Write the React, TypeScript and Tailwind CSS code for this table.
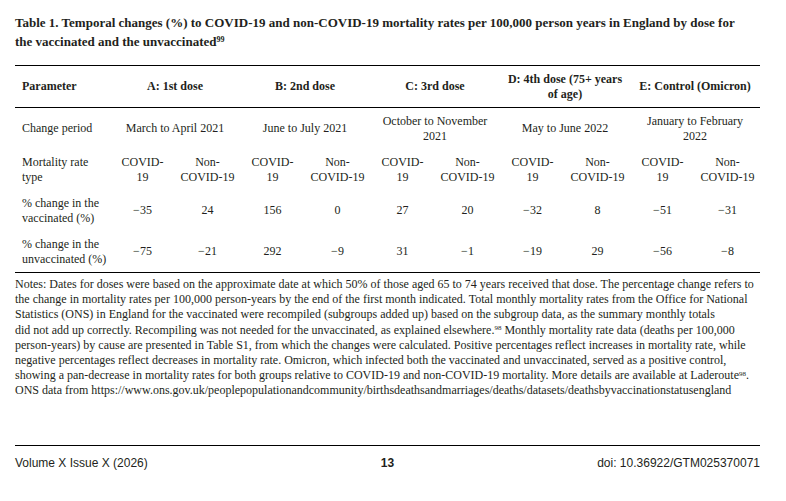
import { Fragment } from 'react';
import type { ReactNode } from 'react';

const serif = { fontFamily: '"Liberation Serif", "Times New Roman", serif' };
const sans = { fontFamily: '"Liberation Sans", Arial, sans-serif' };

type Group = { label: ReactNode; period: ReactNode; vacc: [string, string]; unvacc: [string, string] };

const groups: Group[] = [
  { label: 'A: 1st dose', period: 'March to April 2021', vacc: ['−35', '24'], unvacc: ['−75', '−21'] },
  { label: 'B: 2nd dose', period: 'June to July 2021', vacc: ['156', '0'], unvacc: ['292', '−9'] },
  { label: 'C: 3rd dose', period: <>October to November<br />2021</>, vacc: ['27', '20'], unvacc: ['31', '−1'] },
  { label: <>D: 4th dose (75+ years<br />of age)</>, period: 'May to June 2022', vacc: ['−32', '8'], unvacc: ['−19', '29'] },
  { label: 'E: Control (Omicron)', period: <>January to February<br />2022</>, vacc: ['−51', '−31'], unvacc: ['−56', '−8'] },
];

function Param({ children }: { children: ReactNode }) {
  return <div className="flex items-center pl-[7px]">{children}</div>;
}

function Cell({ children, wide }: { children: ReactNode; wide?: boolean }) {
  return (
    <div className={`flex items-center justify-center text-center ${wide ? 'col-span-2' : ''}`}>
      {children}
    </div>
  );
}

const notes: ReactNode[] = [
  'Notes: Dates for doses were based on the approximate date at which 50% of those aged 65 to 74 years received that dose. The percentage change refers to',
  'the change in mortality rates per 100,000 person-years by the end of the first month indicated. Total monthly mortality rates from the Office for National',
  'Statistics (ONS) in England for the vaccinated were recompiled (subgroups added up) based on the subgroup data, as the summary monthly totals',
  <>did not add up correctly. Recompiling was not needed for the unvaccinated, as explained elsewhere.<sup className="text-[7px]">98</sup> Monthly mortality rate data (deaths per 100,000</>,
  'person-years) by cause are presented in Table S1, from which the changes were calculated. Positive percentages reflect increases in mortality rate, while',
  'negative percentages reflect decreases in mortality rate. Omicron, which infected both the vaccinated and unvaccinated, served as a positive control,',
  <>showing a pan-decrease in mortality rates for both groups relative to COVID-19 and non-COVID-19 mortality. More details are available at Laderoute<sup className="text-[7px]">98</sup>.</>,
  'ONS data from https://www.ons.gov.uk/peoplepopulationandcommunity/birthsdeathsandmarriages/deaths/datasets/deathsbyvaccinationstatusengland',
];

export default function App() {
  return (
    <div className="w-[786px] h-[501px] bg-white text-[#231f20] px-[15px] pt-[13px] flex flex-col" style={serif}>
      <h1 className="text-[13px] leading-[19px] font-bold">
        Table 1. Temporal changes (%) to COVID-19 and non-COVID-19 mortality rates per 100,000 person years in England by dose for
        <br />
        the vaccinated and the unvaccinated<sup className="text-[8px]">99</sup>
      </h1>

      <div className="mt-[14px] w-[745px] border-y border-black text-[12px] leading-[15px]">
        <div className="grid grid-cols-[95px_repeat(10,65px)] h-[42px] border-b border-black font-bold">
          <Param>Parameter</Param>
          {groups.map((g, i) => (
            <Cell key={i} wide>{g.label}</Cell>
          ))}
        </div>
        <div className="grid grid-cols-[95px_repeat(10,65px)] auto-rows-[41px]">
          <Param>Change period</Param>
          {groups.map((g, i) => (
            <Cell key={i} wide>{g.period}</Cell>
          ))}

          <Param>Mortality rate<br />type</Param>
          {groups.map((_, i) => (
            <Fragment key={i}>
              <Cell>COVID-<br />19</Cell>
              <Cell>Non-<br />COVID-19</Cell>
            </Fragment>
          ))}

          <Param>% change in the<br />vaccinated (%)</Param>
          {groups.flatMap((g, i) => g.vacc.map((v, j) => <Cell key={`v${i}${j}`}>{v}</Cell>))}

          <Param>% change in the<br />unvaccinated (%)</Param>
          {groups.flatMap((g, i) => g.unvacc.map((v, j) => <Cell key={`u${i}${j}`}>{v}</Cell>))}
        </div>
      </div>

      <div className="mt-[4px] text-[12px] leading-[15.2px]">
        {notes.map((line, i) => (
          <div key={i} className="whitespace-nowrap">{line}</div>
        ))}
      </div>

      <div className="mt-auto mb-[31px] w-[745px] border-t border-black pt-[10px] grid grid-cols-3 text-[12px] leading-[14px]" style={sans}>
        <span>Volume X Issue X (2026)</span>
        <span className="text-center font-bold">13</span>
        <span className="text-right">doi: 10.36922/GTM025370071</span>
      </div>
    </div>
  );
}
